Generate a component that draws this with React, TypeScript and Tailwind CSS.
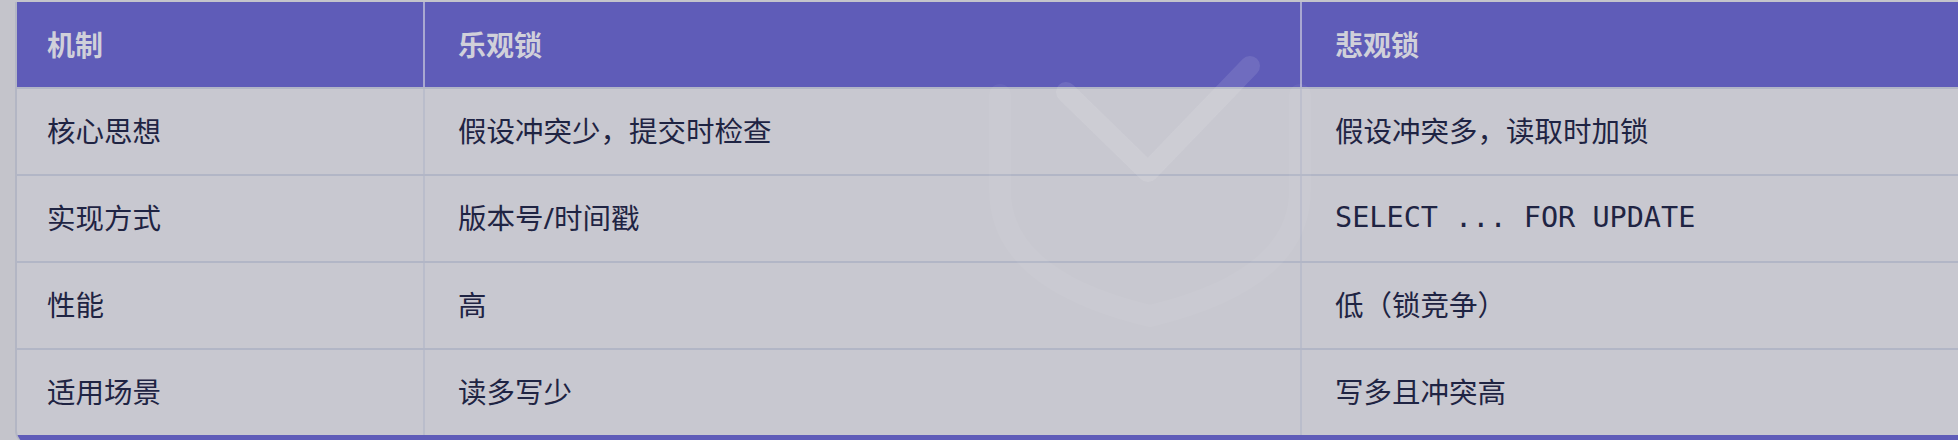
const rows = [
  { k: "核心思想", a: "假设冲突少，提交时检查", b: "假设冲突多，读取时加锁" },
  { k: "实现方式", a: "版本号/时间戳", b: "SELECT ... FOR UPDATE", mono: true },
  { k: "性能", a: "高", b: "低（锁竞争）" },
  { k: "适用场景", a: "读多写少", b: "写多且冲突高" },
];

const cjk = "font-['Noto_Sans','Noto_Sans_CJK_SC',sans-serif]";

function Watermark() {
  // faint shield + check drawn over the middle of the table
  return (
    <svg
      className="absolute left-0 top-0 pointer-events-none"
      width="1958"
      height="440"
      viewBox="0 0 1958 440"
    >
      <g fill="none" stroke="#ffffff" strokeLinecap="round" strokeLinejoin="round">
        <path
          d="M1000 95 L1000 190 Q1000 280 1150 316 Q1300 280 1300 190 L1300 95"
          strokeWidth="22"
          strokeOpacity="0.045"
        />
        <path d="M1066 92 L1148 172 L1250 66" strokeWidth="20" strokeOpacity="0.1" />
      </g>
    </svg>
  );
}

export default function App() {
  return (
    <div className="relative w-[1958px] h-[440px] overflow-hidden bg-[#c4c4cb] pt-[2px] pl-[15px]">
      <div className="w-[2180px] border-l-2 border-[#b3b6c4] rounded-bl-[12px] overflow-hidden bg-[#c8c8d0]">
        {/* Header */}
        <div className={`flex h-[85px] bg-[#5f5cb8] text-[28px] font-bold text-[#d0d0da] ${cjk}`}>
          <div className="w-[408px] flex items-center px-[30px] border-r-2 border-[#c9c9dc]/70">机制</div>
          <div className="w-[877px] flex items-center px-[33px] border-r-2 border-[#c9c9dc]/70">乐观锁</div>
          <div className="flex-1 flex items-center px-[33px]">悲观锁</div>
        </div>

        {/* Body */}
        {rows.map((r) => (
          <div
            key={r.k}
            className={`flex h-[87px] border-t-2 border-[#b2b6c6] text-[28.5px] text-[#1f2443] ${cjk}`}
          >
            <div className="w-[408px] flex items-center px-[30px] border-r-2 border-[#babdcb]">{r.k}</div>
            <div className="w-[877px] flex items-center px-[33px] border-r-2 border-[#babdcb]">{r.a}</div>
            <div
              className={`flex-1 flex items-center px-[33px] ${
                r.mono ? "font-['DejaVu_Sans_Mono',monospace] text-[28.5px]" : ""
              }`}
            >
              {r.b}
            </div>
          </div>
        ))}

        <div className="h-[8px] bg-[#5f5cb8]" />
      </div>

      <Watermark />
    </div>
  );
}
